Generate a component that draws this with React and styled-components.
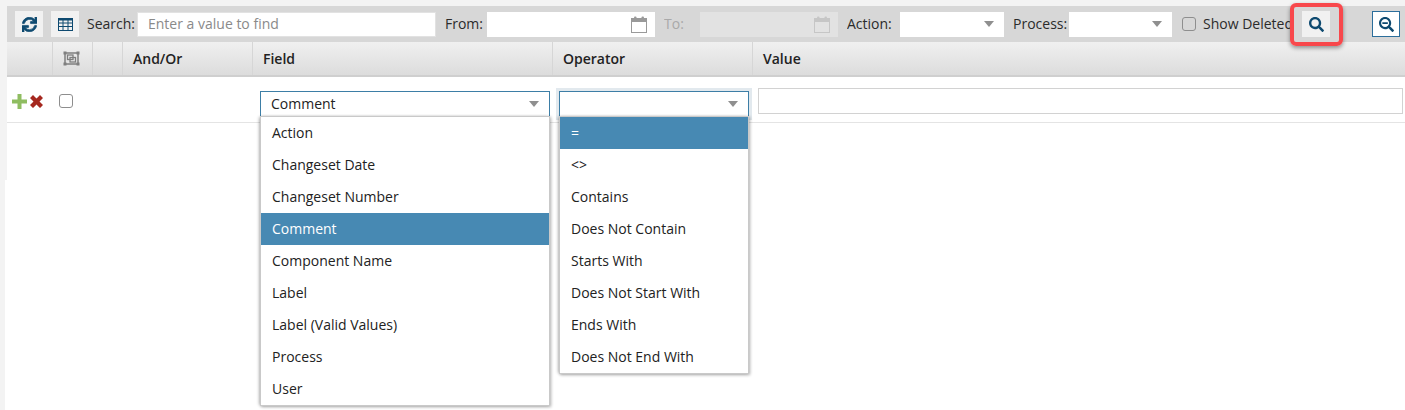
import React from "react";
import styled, { createGlobalStyle } from "styled-components";
import { FaSync, FaSearch, FaSearchMinus } from "react-icons/fa";

const Global = createGlobalStyle`
  html, body { margin: 0; padding: 0; background: #f3f3f3; overflow: hidden; }
  body { font-family: "Open Sans", "Liberation Sans", sans-serif; font-size: 14px; color: #222; }
  * { box-sizing: border-box; }
`;

const Page = styled.div`
  width: 1405px;
  height: 410px;
  padding-top: 6px;
  position: relative;
  overflow: hidden;
`;
const Upper = styled.div`
  margin-left: 7px;
  height: 174px;
  background: #fff;
`;
const Lower = styled.div`
  margin-left: 5px;
  height: 230px;
  background: #fff;
`;
const Toolbar = styled.div`
  height: 36px;
  background: #d7d7d7;
  display: flex;
  align-items: center;
  padding-left: 8px;
  padding-right: 5px;
  position: relative;
`;
const IconButton = styled.button`
  width: 28px;
  height: 26px;
  flex: none;
  padding: 0;
  display: flex;
  align-items: center;
  justify-content: center;
  color: #0e4a70;
  font-size: 15px;
  background: ${p => (p.$outlined ? "#fff" : "#f1f1f1")};
  border: ${p => (p.$outlined ? "1px solid #2c6e9b" : "none")};
  margin-left: ${p => p.$ml || 0}px;
  svg { stroke: currentColor; stroke-width: ${p => (p.$bold ? 24 : 0)}px; }
`;
const Label = styled.span`
  flex: none;
  line-height: 24px;
  margin-left: ${p => p.$ml || 0}px;
  width: ${p => (p.$w ? `${p.$w}px` : "auto")};
  color: ${p => (p.$muted ? "#a9a9a9" : "#2b2b2b")};
  white-space: nowrap;
  overflow: hidden;
`;
const SearchInput = styled.div`
  width: 299px;
  height: 25px;
  flex: none;
  background: #fff;
  border: 1px solid #e2e2e2;
  color: #8a8a8a;
  padding-left: 10px;
  line-height: 22px;
`;
const DateField = styled.div`
  width: ${p => p.$w}px;
  height: 25px;
  flex: none;
  background: ${p => (p.$disabled ? "#e2e2e2" : "#fff")};
  display: flex;
  align-items: center;
  justify-content: flex-end;
  padding-right: 8px;
  color: ${p => (p.$disabled ? "#c6c6c6" : "#9a9a9a")};
`;
const SmallSelect = styled.div`
  width: ${p => p.$w}px;
  height: 25px;
  flex: none;
  background: #fff;
  display: flex;
  align-items: center;
  justify-content: flex-end;
  padding-right: 10px;
`;
const Arrow = styled.span`
  display: block;
  width: 0;
  height: 0;
  border-left: 5.5px solid transparent;
  border-right: 5.5px solid transparent;
  border-top: 6px solid #8f8f8f;
`;
const Check = styled.span`
  display: block;
  flex: none;
  width: 14px;
  height: 14px;
  border: 1px solid #8e8e8e;
  border-radius: 3px;
  margin-left: ${p => p.$ml || 0}px;
  background: ${p => (p.$clear ? "transparent" : "#fff")};
`;
const Highlight = styled.div`
  position: absolute;
  left: 1283px;
  top: -3px;
  width: 53px;
  height: 43px;
  border: 4px solid #f8484c;
  border-radius: 6px;
  box-shadow: 0 2px 4px rgba(0, 0, 0, 0.4);
  pointer-events: none;
`;
const Columns = `45px 40px 30px 130px 300px 200px 1fr`;
const Header = styled.div`
  display: grid;
  grid-template-columns: ${Columns};
  height: 35px;
  background: linear-gradient(#f0f0f0, #dcdcdc);
  border-bottom: 2px solid #cfcfcf;
`;
const HeaderCell = styled.div`
  font-weight: 600;
  color: #222;
  line-height: 33px;
  padding-left: ${p => (p.$center ? 0 : 10)}px;
  padding-right: ${p => (p.$center ? 2 : 0)}px;
  border-left: ${p => (p.$first ? "none" : "1px solid #d6d6d6")};
  display: ${p => (p.$center ? "flex" : "block")};
  align-items: center;
  justify-content: center;
`;
const Row = styled.div`
  display: grid;
  grid-template-columns: ${Columns};
  height: 46px;
  border-bottom: 1px solid #e4e4e4;
  background: #fff;
`;
const ActionCell = styled.div`
  display: flex;
  align-items: flex-start;
  gap: 3px;
  padding: 17px 0 0 5px;
  line-height: 0;
`;
const CheckCell = styled.div`
  padding: 17px 0 0 7px;
`;
const FieldCell = styled.div`
  position: relative;
  padding: 14px 2px 0 8px;
`;
const OperatorCell = styled.div`
  position: relative;
  padding: 14px 3px 0 7px;
`;
const ValueCell = styled.div`
  padding: 11px 2px 0 6px;
`;
const SelectBox = styled.div`
  height: 26px;
  background: #fff;
  border: 1px solid #3d7ea6;
  display: flex;
  align-items: center;
  justify-content: space-between;
  padding: 0 10px 0 10px;
  line-height: 22px;
  box-shadow: ${p => (p.$halo ? "0 0 0 3px #e2e9ee" : "none")};
  position: relative;
  z-index: 1;
`;
const ValueInput = styled.div`
  height: 26px;
  background: #fff;
  border: 1px solid #d2d2d2;
`;
const Menu = styled.ul`
  position: absolute;
  z-index: 2;
  left: ${p => p.$left}px;
  top: 40px;
  width: ${p => p.$w}px;
  margin: 0;
  padding: 0;
  list-style: none;
  background: #fff;
  box-shadow: 0 0 0 1px #c9c9c9, 1px 1px 3px 1px rgba(0, 0, 0, 0.32), -2px 0 3px rgba(0, 0, 0, 0.25);
`;
const MenuItem = styled.li`
  height: 32px;
  line-height: 32px;
  padding-left: 11px;
  color: ${p => (p.$active ? "#fff" : "#222")};
  background: ${p => (p.$active ? "#4789b3" : "#fff")};
`;

const Calendar = () => (
  <svg width="16" height="17" viewBox="0 0 16 17" fill="none">
    <rect x="0.5" y="2.5" width="15" height="14" stroke="currentColor" />
    <rect x="0.5" y="3" width="15" height="3" fill="currentColor" />
    <rect x="3" y="0.5" width="2.5" height="4" rx="1" fill="currentColor" />
    <rect x="10.5" y="0.5" width="2.5" height="4" rx="1" fill="currentColor" />
  </svg>
);
const SelectAllIcon = () => (
  <svg width="17" height="15" viewBox="0 0 17 15" fill="none" stroke="#7f7f7f">
    <rect x="2" y="2" width="13" height="11" strokeWidth="1.5" />
    <rect x="0.5" y="0.5" width="3" height="3" fill="#7f7f7f" strokeWidth="0" />
    <rect x="13.5" y="0.5" width="3" height="3" fill="#7f7f7f" strokeWidth="0" />
    <rect x="0.5" y="11.5" width="3" height="3" fill="#7f7f7f" strokeWidth="0" />
    <rect x="13.5" y="11.5" width="3" height="3" fill="#7f7f7f" strokeWidth="0" />
    <rect x="4.5" y="4" width="5.5" height="4.5" strokeWidth="1.3" />
    <rect x="7" y="6.5" width="5.5" height="4.5" strokeWidth="1.3" />
  </svg>
);
const TableIcon = () => (
  <svg width="15" height="13" viewBox="0 0 15 13" fill="none" style={{ stroke: "#0e4a70", strokeWidth: 1 }}>
    <rect x="0.5" y="0.5" width="14" height="12" />
    <path d="M0.5 1.5h14" strokeWidth="2" />
    <path d="M0.5 5h14M0.5 8.5h14M5 2v10.5M10 2v10.5" />
  </svg>
);
const PlusIcon = () => (
  <svg width="15" height="15" viewBox="0 0 15 15">
    <path d="M5.5 0h4v5.5H15v4H9.5V15h-4V9.5H0v-4h5.5z" fill="#8fbd61" />
  </svg>
);
const CrossIcon = () => (
  <svg width="13" height="13" viewBox="0 0 13 13" style={{ marginTop: 1 }}>
    <path d="M3 0l3.5 3.5L10 0l3 3-3.5 3.5L13 10l-3 3-3.5-3.5L3 13l-3-3 3.5-3.5L0 3z" fill="#a5281f" />
  </svg>
);

const fields = ["Action", "Changeset Date", "Changeset Number", "Comment", "Component Name", "Label", "Label (Valid Values)", "Process", "User"];
const operators = ["=", "<>", "Contains", "Does Not Contain", "Starts With", "Does Not Start With", "Ends With", "Does Not End With"];

export default function App() {
  return (
    <Page>
      <Global />
      <Upper>
        <Toolbar>
          <IconButton $bold><FaSync /></IconButton>
          <IconButton $ml={8}><TableIcon /></IconButton>
          <Label $ml={8} $w={50}>Search:</Label>
          <SearchInput>Enter a value to find</SearchInput>
          <Label $ml={9} $w={42}>From:</Label>
          <DateField $w={168}><Calendar /></DateField>
          <Label $ml={9} $w={36} $muted>To:</Label>
          <DateField $w={138} $disabled><Calendar /></DateField>
          <Label $ml={9} $w={53}>Action:</Label>
          <SmallSelect $w={104}><Arrow /></SmallSelect>
          <Label $ml={9} $w={56}>Process:</Label>
          <SmallSelect $w={103}><Arrow /></SmallSelect>
          <Check $ml={10} $clear />
          <Label $ml={7} $w={89}>Show Deleted</Label>
          <IconButton $ml={10}><FaSearch /></IconButton>
          <IconButton $ml={42} $outlined><FaSearchMinus /></IconButton>
          <Highlight />
        </Toolbar>
        <Header>
          <HeaderCell $first />
          <HeaderCell $center><SelectAllIcon /></HeaderCell>
          <HeaderCell />
          <HeaderCell>And/Or</HeaderCell>
          <HeaderCell>Field</HeaderCell>
          <HeaderCell>Operator</HeaderCell>
          <HeaderCell>Value</HeaderCell>
        </Header>
        <Row>
          <ActionCell>
            <PlusIcon />
            <CrossIcon />
          </ActionCell>
          <CheckCell><Check /></CheckCell>
          <div />
          <div />
          <FieldCell>
            <SelectBox>Comment<Arrow /></SelectBox>
            <Menu $left={9} $w={288}>
              {fields.map(f => <MenuItem key={f} $active={f === "Comment"}>{f}</MenuItem>)}
            </Menu>
          </FieldCell>
          <OperatorCell>
            <SelectBox $halo><span /><Arrow /></SelectBox>
            <Menu $left={8} $w={188}>
              {operators.map(o => <MenuItem key={o} $active={o === "="}>{o}</MenuItem>)}
            </Menu>
          </OperatorCell>
          <ValueCell><ValueInput /></ValueCell>
        </Row>
      </Upper>
      <Lower />
    </Page>
  );
}
